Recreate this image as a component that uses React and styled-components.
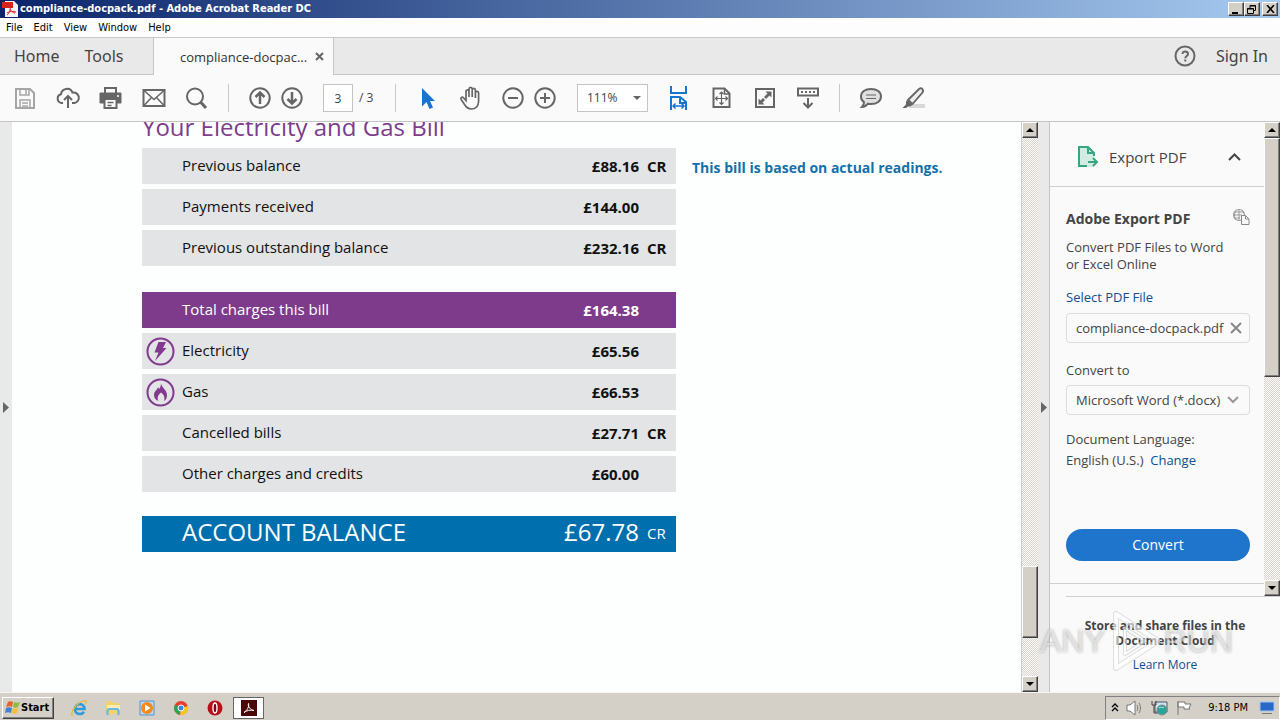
import React from 'react';
import styled, { createGlobalStyle, css } from 'styled-components';

const ui = `'Open Sans', 'Noto Sans', sans-serif`;
const chrome = `'DejaVu Sans Condensed', 'DejaVu Sans', sans-serif`;

const GlobalStyle = createGlobalStyle`
  *, *::before, *::after { box-sizing: border-box; }
  body { margin: 0; background: #fafafa; color: #444; font: 13px/18px ${ui}; }
  button, input, select { font: inherit; color: inherit; margin: 0; padding: 0; border: 0; border-radius: 0; background: none; }
  h1, h2, p { margin: 0; font-weight: normal; }
  a { text-decoration: none; }
  svg { display: block; flex: none; }
`;

const raised = css`
  background: #d4d0c8;
  border: 1px solid;
  border-color: #fff #404040 #404040 #fff;
  box-shadow: inset -1px -1px 0 #808080;
`;

const Window = styled.div`
  position: relative;
  display: flex;
  flex-direction: column;
  min-height: 100vh;
`;

const TitleBar = styled.header`
  display: flex;
  align-items: center;
  gap: 2px;
  height: 18px;
  padding: 0 2px;
  background: linear-gradient(90deg, #0a246a, #a6caf0);
  color: #fff;
  font: bold 11px/18px ${chrome};
`;

const WindowTitle = styled.span`
  flex: 1;
`;

const WindowButtons = styled.div`
  display: flex;
`;

const WindowButton = styled.button`
  ${raised}
  display: grid;
  place-items: center;
  width: 16px;
  height: 14px;
  margin-left: ${(p) => (p.$apart ? '2px' : '0')};
`;

const MenuBar = styled.nav`
  display: flex;
  gap: 11px;
  height: 20px;
  padding: 0 6px;
  background: #fdfdfd;
  border-bottom: 1px solid #c9c9c9;
`;

const MenuItem = styled.button`
  color: #000;
  font: 11px/19px ${chrome};
`;

const TabStrip = styled.div`
  display: flex;
  height: 37px;
  background: #e9e9e9;
`;

const TabSide = styled.div`
  display: flex;
  align-items: center;
  gap: ${(p) => (p.$end ? '20px' : '25px')};
  flex: ${(p) => (p.$end ? '1' : '0 0 153px')};
  justify-content: ${(p) => (p.$end ? 'flex-end' : 'flex-start')};
  padding: 0 ${(p) => (p.$end ? '12px' : '14px')};
  border-bottom: 1px solid #c6c6c6;
`;

const TabButton = styled.button`
  font-family: 'Noto Sans', sans-serif;
  font-size: 16px;
  line-height: 22px;
`;

const IconButton = styled.button`
  color: #666;
`;

const DocTab = styled.div`
  display: flex;
  align-items: center;
  justify-content: space-between;
  flex: 0 0 181px;
  padding: 0 9px 0 26px;
  background: #fafafa;
  border-left: 1px solid #c6c6c6;
  border-right: 1px solid #c6c6c6;
  color: #333;
  font-size: 13px;
  white-space: nowrap;
`;

const ToolBar = styled.div`
  display: flex;
  align-items: center;
  gap: 18px;
  height: 47px;
  padding: 0 12px;
  background: #fafafa;
  border-bottom: 1px solid #c4c4c4;
  font-size: 12px;
`;

const ToolGroup = styled.div`
  display: flex;
  align-items: center;
  gap: ${(p) => (p.$tight ? '6px' : '17px')};
`;

const ToolButton = styled.button`
  width: 26px;
  height: 26px;
  color: ${(p) => (p.$tone === 'off' ? '#a5a5a5' : p.$tone === 'on' ? '#1a73cf' : '#666')};
`;

const Separator = styled.span`
  width: 1px;
  height: 28px;
  background: #c8c8c8;
`;

const PageInput = styled.input`
  width: 30px;
  height: 28px;
  border: 1px solid #c4c4c4;
  background: #fff;
  text-align: center;
`;

const PageTotal = styled.span`
  width: 18px;
  white-space: nowrap;
`;

const SelectWrap = styled.div`
  display: flex;
  align-items: center;
  height: ${(p) => (p.$round ? '30px' : '28px')};
  width: ${(p) => (p.$round ? 'auto' : '71px')};
  border: 1px solid ${(p) => (p.$round ? '#dcdcdc' : '#c4c4c4')};
  border-radius: ${(p) => (p.$round ? '4px' : '0')};
  background: ${(p) => (p.$round ? '#fafafa' : '#fff')};
  padding: 0 ${(p) => (p.$round ? '10px' : '6px')} 0 9px;
`;

const PlainSelect = styled.select`
  appearance: none;
  flex: 1;
  min-width: 0;
  height: 26px;
  outline: 0;
`;

const Workspace = styled.main`
  display: flex;
  flex: 1;
`;

const Gutter = styled.button`
  display: flex;
  align-items: center;
  flex: none;
  width: 12px;
  padding-left: 3px;
  background: #e9e9e9;
  border-right: ${(p) => (p.$line ? '1px solid #c4c4c4' : '0')};
`;

const Page = styled.article`
  flex: 1;
  display: flex;
  gap: 16px;
  padding: 0 24px 0 130px;
  background: #fdfffe;
  overflow: hidden;
  color: #111;
`;

const Bill = styled.section`
  flex: 0 1 534px;
  margin-top: -12px;
`;

const BillHeading = styled.h1`
  height: 33px;
  color: #7d3c8c;
  font-size: 24px;
  line-height: 34px;
`;

const BillTable = styled.table`
  width: 100%;
  margin-bottom: ${(p) => (p.$last ? '14px' : '16px')};
  border-spacing: 0 5px;
  table-layout: fixed;
  font-size: 15px;
  line-height: 22px;
`;

const tones = {
  grey: css`background: #e2e4e5; color: #111;`,
  purple: css`background: #7f3b8b; color: #fff;`,
  blue: css`background: #006fae; color: #fff; font-size: 24px;`,
};

const BillRow = styled.tr`
  height: 36px;
  ${(p) => tones[p.$tone]}
`;

const IconCell = styled.td`
  width: 40px;
  padding: 0 4px;
`;

const LabelCell = styled.th`
  padding: 0 0 ${(p) => (p.$light ? '4px' : '2px')};
  text-align: left;
  font-weight: normal;
`;

const AmountCell = styled.td`
  width: 120px;
  padding: 0 0 ${(p) => (p.$light ? '4px' : '0')};
  text-align: right;
  font-weight: ${(p) => (p.$light ? 'normal' : 'bold')};
`;

const CreditCell = styled.td`
  width: 37px;
  padding: 0 0 ${(p) => (p.$light ? '2px' : '0')} 8px;
  font-size: 15px;
  font-weight: ${(p) => (p.$light ? 'normal' : 'bold')};
`;

const Notice = styled.p`
  padding-top: 35px;
  color: #1470ab;
  font-size: 14px;
  font-weight: bold;
  line-height: 22px;
  white-space: nowrap;
`;

const ScrollTrack = styled.div`
  display: flex;
  flex-direction: column;
  flex: 0 0 ${(p) => (p.$wide ? '17px' : '16px')};
  background: repeating-conic-gradient(#d9d4cd 0 25%, #fbfaf8 0 50%) 0 0 / 2px 2px;
  border-left: ${(p) => (p.$wide ? '1px solid #c8d0d0' : '0')};
`;

const ScrollButton = styled.button`
  ${raised}
  display: grid;
  place-items: center;
  height: 16px;
`;

const ScrollSpace = styled.span`
  flex: ${(p) => p.$grow};
`;

const ScrollThumb = styled.span`
  ${raised}
  flex: ${(p) => p.$grow};
`;

const SidePanel = styled.aside`
  display: flex;
  flex-direction: column;
  flex: 0 0 230px;
  min-width: 0;
  background: #fafafa;
`;

const SideTop = styled.div`
  display: flex;
  flex: 1;
`;

const SideContent = styled.div`
  flex: 1;
  min-width: 0;
  display: flex;
  flex-direction: column;
`;

const SideHeader = styled.div`
  display: flex;
  align-items: center;
  gap: 8px;
  height: 65px;
  padding: 6px 23px 0 25px;
  border-bottom: 1px solid #cfcfcf;
`;

const SideTitle = styled.h2`
  flex: 1;
  font-size: 15px;
`;

const ExportForm = styled.form`
  display: flex;
  flex-direction: column;
  flex: 1;
  padding: 22px 14px 22px 16px;
`;

const FormHeading = styled.div`
  display: flex;
  justify-content: space-between;
  font-size: 14px;
  font-weight: bold;
  line-height: 20px;
`;

const FormText = styled.p`
  padding-top: 10px;
  line-height: 17px;
`;

const Link = styled.a`
  color: #0d4f8f;
`;

const SelectLink = styled(Link)`
  display: block;
  padding: 15px 0 7px;
`;

const FileBox = styled.div`
  display: flex;
  align-items: center;
  height: 30px;
  padding: 0 7px 0 9px;
  border: 1px solid #dcdcdc;
  border-radius: 4px;
`;

const FileInput = styled.input`
  flex: 1;
  min-width: 0;
  outline: 0;
`;

const FieldLabel = styled.label`
  padding: 18px 0 6px;
`;

const LanguageText = styled.p`
  padding-top: 14px;
  line-height: 21px;
`;

const ConvertButton = styled.button`
  height: 32px;
  margin-top: auto;
  border-radius: 16px;
  background: #1f74cb;
  color: #fff;
  font-size: 14px;
`;

const SideTail = styled.div`
  height: 13px;
  border-top: 1px solid #cfcfcf;
`;

const CloudPromo = styled.section`
  margin-left: 16px;
  height: 96px;
  padding: 21px 16px 0 0;
  border-top: 1px solid #cfcfcf;
  text-align: center;
  line-height: 15px;
  white-space: nowrap;
`;

const PromoTitle = styled.h2`
  display: flex;
  flex-direction: column;
  align-items: center;
  padding-bottom: 9px;
  font-size: 12px;
  font-weight: bold;
`;

const PromoLink = styled(Link)`
  font-size: 12px;
`;

const TaskBar = styled.footer`
  display: flex;
  align-items: center;
  gap: 10px;
  height: 28px;
  padding: 2px 0 0 2px;
  background: #d4d0c8;
  border-top: 1px solid #f6f5f2;
  color: #000;
  font: 11px/18px ${chrome};
`;

const StartButton = styled.button`
  ${raised}
  display: flex;
  align-items: center;
  gap: 1px;
  width: 52px;
  height: 22px;
  margin-right: 3px;
  padding-left: 2px;
  font-weight: bold;
`;

const TaskButton = styled.button`
  display: grid;
  place-items: center;
  width: ${(p) => (p.$active ? '31px' : '24px')};
  height: 22px;
  margin-left: ${(p) => (p.$active ? '-4px' : '0')};
  background: ${(p) => (p.$active ? '#fff' : 'none')};
  border: ${(p) => (p.$active ? '1px solid #666' : '0')};
`;

const Tray = styled.div`
  display: flex;
  align-items: center;
  gap: 7px;
  height: 24px;
  margin-left: auto;
  padding: 0 4px 0 5px;
  border: 1px solid;
  border-color: #808080 #fff #fff #808080;
`;

const Clock = styled.time`
  padding: 0 4px 0 8px;
`;

const Watermark = styled.div`
  position: absolute;
  right: 47px;
  bottom: 49px;
  display: flex;
  align-items: center;
  gap: 4px;
  color: rgba(255, 255, 255, 0.5);
  font: 32px/60px 'Liberation Sans', sans-serif;
  text-shadow: 0 0 3px rgba(90, 90, 90, 0.5);
  pointer-events: none;
`;

const WatermarkLogo = styled.span`
  opacity: 0.6;
`;

const Draw = ({ size = 26, w = size, h = size, box, children, sw = 2 }) => (
  <svg width={w} height={h} viewBox={box || `0 0 ${w} ${h}`} fill="none" stroke="currentColor" strokeWidth={sw} aria-hidden="true">
    {children}
  </svg>
);

const Arrow = ({ dir, color = '#000' }) => {
  const d = { up: 'M0 4 4 0 8 4Z', down: 'M0 0H8L4 4Z', right: 'M0 0 6 5.500 0 11Z' }[dir];
  const tall = dir === 'right';
  return (
    <svg width={tall ? 6 : 8} height={tall ? 11 : 4} viewBox={tall ? '0 0 6 11' : '0 0 8 4'} fill={color} aria-hidden="true">
      <path d={d} />
    </svg>
  );
};

const PdfMark = () => (
  <svg width="16" height="16" viewBox="0 0 16 16" aria-hidden="true">
    <path d="M3 0h9l4 4v12H3z" fill="#f4f4f4" />
    <path d="M0 1h11v6H0z" fill="#d8231b" />
    <path d="M5 14c2-1 4-6 3-8M5 12c3-2 6-2 9-1M8 8c1 2 3 4 5 4" stroke="#d8231b" fill="none" />
  </svg>
);

const icons = {
  save: <><path d="M4 4h14l4 4v15H4z" /><path d="M8 4v6h9V4M8 23v-8h10v8M14 5v4M10 18h6M10 21h6" strokeWidth="1.500" /></>,
  cloud: <><path d="M8 18H6.500A4.500 4.500 0 0 1 6 9.200 6 6 0 0 1 17.500 7.500 5.200 5.200 0 0 1 19.500 18H17" /><path d="M13 23V11M9 15l4-4 4 4" /></>,
  print: <><path d="M7 8V3h11v5" /><path d="M2 8h21v10H2z" fill="currentColor" strokeWidth="1" /><path d="M6.500 14h12v9h-12z" fill="#fafafa" /><path d="M9.500 17.500h6M9.500 20.500h4" strokeWidth="1.300" /><path d="M19 11h2" stroke="#fff" strokeWidth="1.500" /></>,
  mail: <><path d="M2.500 5h21v16h-21z" /><path d="m3 5.500 10 9 10-9M3 20.500l7.500-8M23 20.500l-7.500-8" strokeWidth="1.500" /></>,
  search: <><circle cx="11" cy="11.500" r="8" /><path d="m16.500 17 5.500 6" strokeWidth="3" /></>,
  up: <><circle cx="13" cy="13" r="9.700" /><path d="M13 19V8M8.500 12 13 7.500l4.500 4.500" strokeWidth="2.500" /></>,
  down: <><circle cx="13" cy="13" r="9.700" /><path d="M13 7v11M8.500 14l4.500 4.500 4.500-4.500" strokeWidth="2.500" /></>,
  cursor: <path d="M8 3v18.500l4.500-4.500 3 7 3.500-1.500-3-6.500h5z" fill="currentColor" stroke="none" />,
  hand: <path d="M9 15.500V6.500c0-2.200 3-2.200 3 0V12 4c0-2.200 3.200-2.200 3.200 0v8V5c0-2.200 3.200-2.200 3.200 0v8V8c0-2.200 3.200-2 3.200 0v8c0 5-3 8-7.100 8-4 0-5.500-2-7-4.500l-3.300-5c-1-2 1-3 2.500-1.500z" strokeWidth="1.700" />,
  minus: <><circle cx="12" cy="13" r="9.700" /><path d="M7 13h10" /></>,
  plus: <><circle cx="12" cy="13" r="9.700" /><path d="M7 13h10M12 8v10" /></>,
  fitWidth: <><path d="M5 1v7h15V1M5 25V12h9l6 5v8M14 12v6h6" /><path d="M7 21h11M9.500 18.500 7 21l2.500 2.500M15.500 18.500 18 21l-2.500 2.500" strokeWidth="1.500" /></>,
  fitPage: <><path d="M4.500 3.500h11l5 5V22h-16z" /><path d="M15.500 4v5h5" strokeWidth="1.500" /><path d="M12.500 7.500v11M7 13.500h11M10.500 9l2-2 2 2M10.500 17.500l2 2 2-2M8.500 11.500l-2 2 2 2M16.500 11.500l2 2-2 2" strokeWidth="1.200" /></>,
  full: <><path d="M4 4h18v18H4z" /><path d="M13.500 6.500h6v6l-2-2-3.500 3.500-2-2 3.500-3.500zM6.500 13.500v6h6l-2-2 2.500-2.500-2-2-2.500 2.500z" fill="currentColor" stroke="none" /></>,
  keys: <><path d="M3 3.500h20v7H3z" /><path d="M6 7h14" strokeDasharray="2 2" /><path d="M13 13v9M8.500 18l4.500 4.500 4.500-4.500" /></>,
  comment: <><path d="M13 4c6 0 10 3 10 7.500S19 19 13 19c-1 0-2 0-3-.3-1.500 2-3.500 3.300-6 3.300 1.500-1.500 2-3 2-4.800C4 16 3 14 3 11.500 3 7 7 4 13 4z" fill="#e0e0e0" /><path d="M8 10h10M8 13.500h10" strokeWidth="1.200" /></>,
  pen: <><path d="M11 19h13v4H8z" fill="#d8d8d8" stroke="none" /><path d="M7 15 18 4c3-2 5 1 3.500 3.500L11.500 19z" fill="#eee" strokeWidth="1.900" /><path d="m6 15 5.500 4.500-2 2-2.500 0L5 23H1.500L5 19.500V17z" fill="currentColor" stroke="none" /></>,
};

const Tool = ({ name, label, tone }) => (
  <ToolButton type="button" aria-label={label} $tone={tone}>
    <Draw>{icons[name]}</Draw>
  </ToolButton>
);

const Electricity = () => (
  <Draw size={29} sw={2}>
    <circle cx="14.500" cy="14.500" r="13" />
    <path d="M12.500 5h7.500l-3 6h3.500L9 24l3.500-8.500H8.500z" fill="currentColor" stroke="none" />
  </Draw>
);

const Gas = () => (
  <Draw size={29} sw={2}>
    <circle cx="14.500" cy="14.500" r="13" />
    <path d="M15 5c0 4 6 7 6 12 0 3-1 5-3 6 1-3 .5-6-3-8.500-3.500 3-4 5.500-2.500 8.500C9.500 22 8 20 8 17c0-4 3.500-5 4-8l1 2c1.500-1.500 2-3.500 2-6z" fill="currentColor" stroke="none" />
  </Draw>
);

const BillIcon = styled.span`
  display: block;
  color: #82398f;
`;

const balances = [
  { label: 'Previous balance', amount: '£88.16', credit: 'CR' },
  { label: 'Payments received', amount: '£144.00' },
  { label: 'Previous outstanding balance', amount: '£232.16', credit: 'CR' },
];

const charges = [
  { label: 'Total charges this bill', amount: '£164.38', tone: 'purple' },
  { label: 'Electricity', amount: '£65.56', icon: <Electricity /> },
  { label: 'Gas', amount: '£66.53', icon: <Gas /> },
  { label: 'Cancelled bills', amount: '£27.71', credit: 'CR' },
  { label: 'Other charges and credits', amount: '£60.00' },
];

const total = [{ label: 'ACCOUNT BALANCE', amount: '£67.78', credit: 'CR', tone: 'blue', light: true }];

const Rows = ({ items, last }) => (
  <BillTable $last={last}>
    <tbody>
      {items.map((r) => (
        <BillRow key={r.label} $tone={r.tone || 'grey'}>
          <IconCell>{r.icon && <BillIcon>{r.icon}</BillIcon>}</IconCell>
          <LabelCell scope="row" $light={r.light}>{r.label}</LabelCell>
          <AmountCell $light={r.light}>{r.amount}</AmountCell>
          <CreditCell $light={r.light}>{r.credit}</CreditCell>
        </BillRow>
      ))}
    </tbody>
  </BillTable>
);

const Scrollbar = ({ wide, before, thumb, after }) => (
  <ScrollTrack $wide={wide}>
    <ScrollButton type="button" aria-label="Scroll up"><Arrow dir="up" /></ScrollButton>
    <ScrollSpace $grow={before} />
    <ScrollThumb $grow={thumb} />
    <ScrollSpace $grow={after} />
    <ScrollButton type="button" aria-label="Scroll down"><Arrow dir="down" /></ScrollButton>
  </ScrollTrack>
);

const StartFlag = () => (
  <svg width="15" height="16" viewBox="0 0 15 16" aria-hidden="true">
    <path d="M3 2c2-1 3-1 5 0L7 7C5 6 4 6 1 7z" fill="#e8602c" />
    <path d="M9 2c2 1 3 1 6 0l-2 5c-2 1-3 1-5 0z" fill="#8cbc3c" />
    <path d="M1 8c2-1 4-1 6 0l-1 5c-2-1-4-1-6 0z" fill="#3f83cf" />
    <path d="M8 8c2 1 3 1 5 0l-1 5c-2 1-3 1-5 0z" fill="#f5bf2c" />
  </svg>
);

const taskIcons = [
  ['Internet Explorer', <><path d="M4 10h10.500c0-6.500-9.500-6.500-9.500 0 0 6 7 6 9 2.800" stroke="#2f9bdc" strokeWidth="2.600" /><path d="M3 16C0 18 2 9 9 4c7-4.500 9-2 6 1" stroke="#e4b93c" strokeWidth="1.300" /></>],
  ['Explorer', <><path d="M2 2h6l1 2h7v11H2z" fill="#f0d36d" stroke="none" /><path d="M3 6h13v5H3z" fill="#fbeeb0" stroke="none" /><path d="M3.500 16v-4c0-1 1-2 2-2h7c1 0 2 1 2 2v4" stroke="#68b7e6" strokeWidth="2.200" /></>],
  ['Media Player', <><path d="M2 2h14v14H2z" fill="#b7d9f2" stroke="#5393cc" strokeWidth="1" /><circle cx="9" cy="9" r="6" fill="#f48a1b" stroke="none" /><path d="m7 5.500 5.500 3.500L7 12.500z" fill="#fff" stroke="none" /></>],
  ['Chrome', <><circle cx="9" cy="9" r="7" fill="#e34133" stroke="none" /><path d="M9 9 2.800 6A7 7 0 0 0 8 16z" fill="#2ea44f" stroke="none" /><path d="m9 9 7-2a7 7 0 0 1-8 9z" fill="#f5c628" stroke="none" /><circle cx="9" cy="9" r="3" fill="#3f84e8" stroke="#fff" strokeWidth="1" /></>],
  ['Opera', <><circle cx="9" cy="9" r="7.500" fill="#b90f1b" stroke="none" /><ellipse cx="9" cy="9" rx="2" ry="5" fill="#7b0810" stroke="#fff" strokeWidth="1.400" /></>],
];

export default function App() {
  return (
    <Window>
      <GlobalStyle />
      <TitleBar>
        <PdfMark />
        <WindowTitle>compliance-docpack.pdf - Adobe Acrobat Reader DC</WindowTitle>
        <WindowButtons>
          <WindowButton type="button" aria-label="Minimize"><Draw w={10} h={9} sw={2}><path d="M1 8h6" stroke="#000" /></Draw></WindowButton>
          <WindowButton type="button" aria-label="Restore"><Draw w={10} h={9} sw={1}><path d="M3 3V.5h5.500v5H7M3 1h6M.5 3.500h6v5h-6zM0 4h7" stroke="#000" /></Draw></WindowButton>
          <WindowButton type="button" aria-label="Close" $apart><Draw w={9} h={8} sw={2}><path d="m1 0 7 8M8 0 1 8" stroke="#000" strokeWidth="1.600" /></Draw></WindowButton>
        </WindowButtons>
      </TitleBar>
      <MenuBar>
        {['File', 'Edit', 'View', 'Window', 'Help'].map((m) => <MenuItem type="button" key={m}>{m}</MenuItem>)}
      </MenuBar>
      <TabStrip>
        <TabSide>
          <TabButton type="button">Home</TabButton>
          <TabButton type="button">Tools</TabButton>
        </TabSide>
        <DocTab>
          <span>compliance-docpac...</span>
          <IconButton type="button" aria-label="Close tab"><Draw size={9}><path d="m1 1 7 7M8 1 1 8" /></Draw></IconButton>
        </DocTab>
        <TabSide $end>
          <IconButton type="button" aria-label="Help">
            <Draw size={22}><circle cx="11" cy="11" r="9.500" /><path d="M8.500 9c0-3.500 5.500-3.300 5.500 0 0 2-2.700 2-2.700 4.300M11.300 14.500v2" /></Draw>
          </IconButton>
          <TabButton type="button">Sign In</TabButton>
        </TabSide>
      </TabStrip>
      <ToolBar>
        <ToolGroup>
          <Tool name="save" label="Save" tone="off" />
          <Tool name="cloud" label="Upload" />
          <Tool name="print" label="Print" />
          <Tool name="mail" label="Email" />
          <Tool name="search" label="Find" />
        </ToolGroup>
        <Separator />
        <ToolGroup $tight>
          <Tool name="up" label="Previous page" />
          <Tool name="down" label="Next page" />
        </ToolGroup>
        <ToolGroup $tight>
          <PageInput aria-label="Page" defaultValue="3" />
          <PageTotal>/ 3</PageTotal>
        </ToolGroup>
        <Separator />
        <ToolGroup>
          <Tool name="cursor" label="Select" tone="on" />
          <Tool name="hand" label="Pan" />
        </ToolGroup>
        <ToolGroup $tight>
          <Tool name="minus" label="Zoom out" />
          <Tool name="plus" label="Zoom in" />
        </ToolGroup>
        <SelectWrap>
          <PlainSelect aria-label="Zoom"><option>111%</option></PlainSelect>
          <Arrow dir="down" color="#666" />
        </SelectWrap>
        <ToolGroup>
          <Tool name="fitWidth" label="Fit width" tone="on" />
          <Tool name="fitPage" label="Fit page" />
          <Tool name="full" label="Full screen" />
          <Tool name="keys" label="Read mode" />
        </ToolGroup>
        <Separator />
        <ToolGroup>
          <Tool name="comment" label="Comment" />
          <Tool name="pen" label="Highlight" />
        </ToolGroup>
      </ToolBar>
      <Workspace>
        <Gutter type="button" aria-label="Show navigation pane"><Arrow dir="right" color="#666" /></Gutter>
        <Page>
          <Bill>
            <BillHeading>Your Electricity and Gas Bill</BillHeading>
            <Rows items={balances} />
            <Rows items={charges} last />
            <Rows items={total} last />
          </Bill>
          <Notice>This bill is based on actual readings.</Notice>
        </Page>
        <Scrollbar wide before={430} thumb={70} after={38} />
        <Gutter type="button" aria-label="Hide tools pane" $line><Arrow dir="right" color="#666" /></Gutter>
        <SidePanel>
          <SideTop>
            <SideContent>
              <SideHeader>
                <Draw w={26} h={24} sw={2}>
                  <path d="M4 2h9l6 6v14H4z" fill="#d3ece2" stroke="none" />
                  <path d="M12 21H4V2h9l6 6v3M13 2v6h6M13 17h9M18 13l4 4-4 4" stroke="#36a583" />
                </Draw>
                <SideTitle>Export PDF</SideTitle>
                <Draw w={13} h={8} sw={2}><path d="m1 7 5.500-5.500L12 7" /></Draw>
              </SideHeader>
              <ExportForm>
                <FormHeading>
                  Adobe Export PDF
                  <Draw w={17} h={16} sw={1}>
                    <circle cx="6" cy="6" r="5.500" stroke="#999" /><path d="M0 6h9M6 0v11M3 1c-2 3-2 7 0 10M9 1c1 1 2 3 2 4M1 3h10M1 9h6" stroke="#999" />
                    <path d="M8.500 6.500h4l3.500 3.500v5.500H8.500zM12.500 7v3h3" fill="#fafafa" stroke="#888" />
                  </Draw>
                </FormHeading>
                <FormText>Convert PDF Files to Word<br />or Excel Online</FormText>
                <SelectLink href="#select">Select PDF File</SelectLink>
                <FileBox>
                  <FileInput aria-label="Selected file" readOnly value="compliance-docpack.pdf" />
                  <button type="button" aria-label="Remove file"><Draw size={12}><path d="m1 1 10 10M11 1 1 11" stroke="#888" /></Draw></button>
                </FileBox>
                <FieldLabel htmlFor="format">Convert to</FieldLabel>
                <SelectWrap $round>
                  <PlainSelect id="format"><option>Microsoft Word (*.docx)</option></PlainSelect>
                  <Draw w={12} h={8}><path d="m1 1 5 5 5-5" stroke="#999" /></Draw>
                </SelectWrap>
                <LanguageText>Document Language:<br />English (U.S.)&nbsp; <Link href="#language">Change</Link></LanguageText>
                <ConvertButton type="button">Convert</ConvertButton>
              </ExportForm>
              <SideTail />
            </SideContent>
            <Scrollbar before={0} thumb={238} after={204} />
          </SideTop>
          <CloudPromo>
            <PromoTitle><span>Store and share files in the</span><span>Document Cloud</span></PromoTitle>
            <PromoLink href="#learn">Learn More</PromoLink>
          </CloudPromo>
        </SidePanel>
      </Workspace>
      <TaskBar>
        <StartButton type="button"><StartFlag />Start</StartButton>
        {taskIcons.map(([name, art]) => (
          <TaskButton type="button" key={name} aria-label={name}><Draw size={18}>{art}</Draw></TaskButton>
        ))}
        <TaskButton type="button" aria-label="Acrobat Reader" $active>
          <Draw size={16}><path d="M0 0h16v16H0z" fill="#4a0808" stroke="none" /><path d="M3 12.500c3-2 5.500-6 4.500-9-1 3 2 6.500 5.500 7C9.500 9.500 5.500 10.500 3 12.500z" stroke="#fff" strokeWidth="1" /></Draw>
        </TaskButton>
        <Tray>
          <Draw w={8} h={11} sw={1}><path d="m1 5 3-3 3 3M1 9l3-3 3 3" stroke="#000" strokeWidth="1.400" /></Draw>
          <Draw w={18} h={16} sw={1}><path d="M1 5h3l5-4v14l-5-4H1z" fill="#fff" stroke="#777" /><path d="M11 5c1 2 1 4 0 6M13 3c2 3 2 7 0 10" stroke="#777" /></Draw>
          <Draw w={18} h={16} sw={1}><path d="M4 2h12v10H4z" fill="#cfe4f2" stroke="#555" /><path d="M1 1v4h4V1M3 5v8h4" stroke="#444" /><circle cx="11" cy="10" r="5" fill="#27a59a" stroke="#888" /><path d="M8 8c2-2 3 1 5-1" stroke="#bfe9d0" /></Draw>
          <Draw w={17} h={16} sw={1}><path d="M2 1v14M2 2h7v2h6l-2 4 1 1H8V7H2z" fill="#fff" stroke="#777" /></Draw>
          <Clock>9:18 PM</Clock>
          <Draw w={16} h={14} sw={1}><path d="M1 1h14v9H1z" fill="#2968c6" stroke="#9ec4ee" /><path d="M3 12.500h10" stroke="#777" /></Draw>
        </Tray>
      </TaskBar>
      <Watermark aria-hidden="true">
        <span>ANY</span>
        <WatermarkLogo>
          <Draw w={50} h={60}>
            <g strokeLinejoin="round">
              <path d="M6 3v54l42-27z" stroke="#ccc" strokeWidth="6" /><path d="M6 3v54l42-27z" stroke="#fff" strokeWidth="4" />
              <path d="M15 17v26l20-13z" stroke="#ccc" strokeWidth="4" /><path d="M15 17v26l20-13z" stroke="#fff" />
            </g>
          </Draw>
        </WatermarkLogo>
        <span>RUN</span>
      </Watermark>
    </Window>
  );
}
